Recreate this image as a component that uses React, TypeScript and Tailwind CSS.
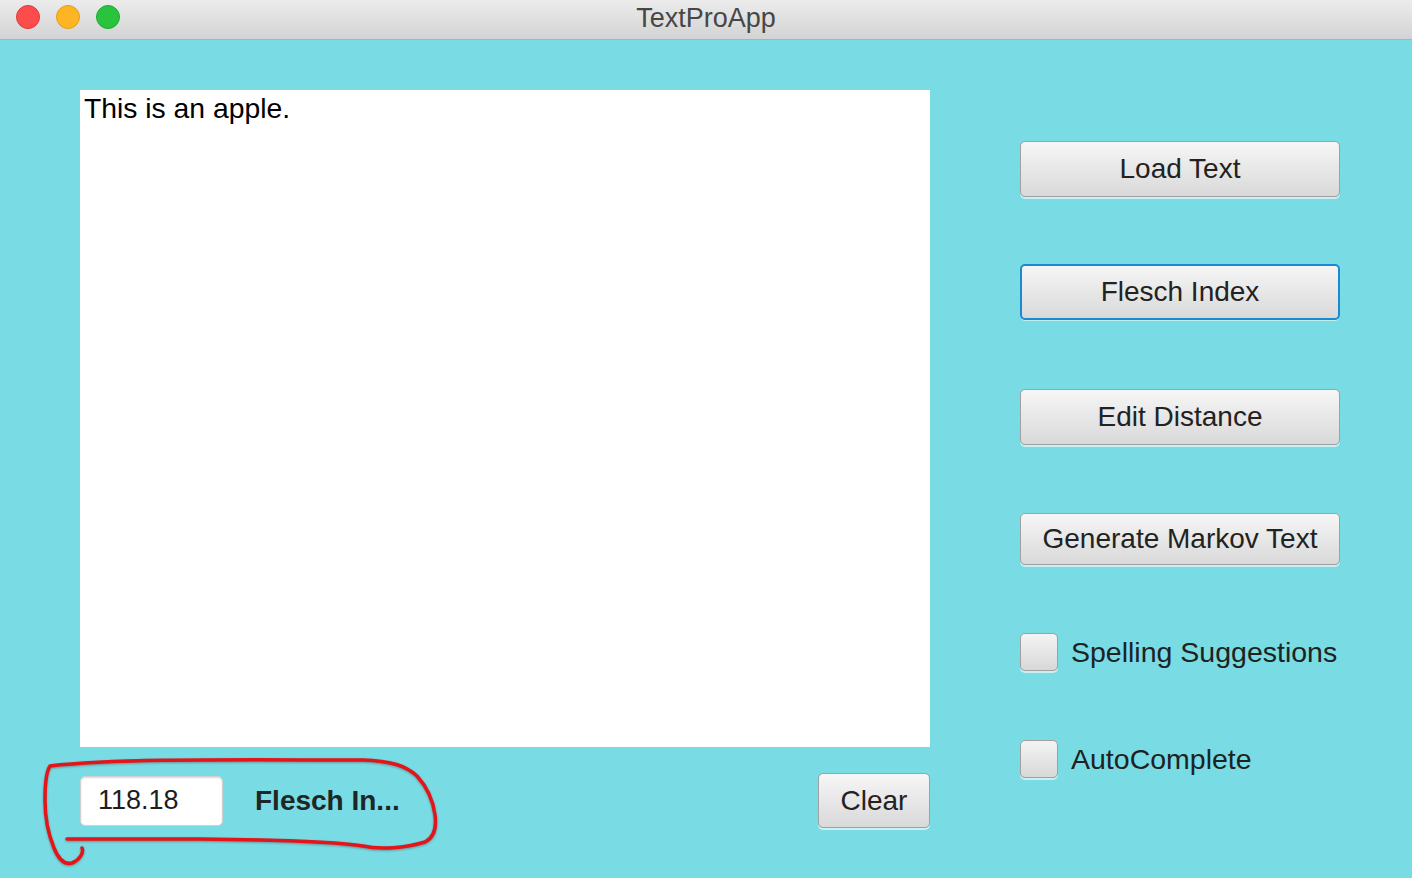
import React from "react";

const font = { fontFamily: '"Liberation Sans", Arial, Helvetica, sans-serif' };

function Btn({ label, focused = false, h = "h-[56px]" }: { label: string; focused?: boolean; h?: string }) {
  return (
    <div
      className={`${h} w-[320px] flex items-center justify-center rounded-[5px] bg-gradient-to-b from-[#f6f6f6] to-[#d9d9d9] text-[28px] text-[#222] ${
        focused
          ? "border-2 border-[#1b8ad3] shadow-[0_1px_0_#bfeff3]"
          : "border border-[#a0a0a0] shadow-[0_2px_0_#c9f1f4]"
      }`}
    >
      {label}
    </div>
  );
}

function Check({ label }: { label: string }) {
  return (
    <div className="flex items-center gap-[13px]">
      <div className="w-[38px] h-[38px] rounded-[5px] border border-[#a0a0a0] bg-gradient-to-b from-[#f4f4f4] to-[#d8d8d8] shadow-[0_2px_0_#c9f1f4]" />
      <span className="text-[28.5px] text-[#1d2222]">{label}</span>
    </div>
  );
}

export default function App() {
  return (
    <div className="relative w-[1412px] h-[878px] overflow-hidden bg-[#79dbe3]" style={font}>
      {/* title bar */}
      <div className="relative h-[40px] flex items-center justify-center bg-gradient-to-b from-[#ececec] to-[#d3d3d3] border-b border-[#b0b0b0]">
        <div className="absolute left-[16px] top-[5px] flex gap-[16px]">
          <div className="w-[24px] h-[24px] rounded-full bg-[#fc4c4b] border border-[#de3a3a]" />
          <div className="w-[24px] h-[24px] rounded-full bg-[#fdb524] border border-[#e09e1e]" />
          <div className="w-[24px] h-[24px] rounded-full bg-[#2ac33d] border border-[#1eab2e]" />
        </div>
        <span className="text-[27px] text-[#474747] leading-none mt-[-2px]">TextProApp</span>
      </div>

      <div className="flex">
        {/* left column */}
        <div className="pl-[80px] pt-[50px] w-[930px] flex flex-col">
          <div className="w-[850px] h-[657px] bg-white px-[4px] pt-[1px] text-[28.3px] text-black leading-[34px]">
            This is an apple.
          </div>
          <div className="flex items-center mt-[26px] h-[55px]">
            <div className="w-[143px] h-[50px] rounded-[5px] bg-white border border-[#d0d0d0] shadow-[inset_0_1px_2px_rgba(0,0,0,0.15)] flex items-center pl-[17px] text-[27px] text-[#1d1d1d]">
              118.18
            </div>
            <span className="ml-[32px] text-[28px] font-bold text-[#1f2626]">Flesch In...</span>
            <div className="ml-auto w-[112px] h-[55px] flex items-center justify-center rounded-[5px] border border-[#a0a0a0] bg-gradient-to-b from-[#f6f6f6] to-[#d9d9d9] text-[28px] text-[#222] shadow-[0_2px_0_#c9f1f4]">
              Clear
            </div>
          </div>
        </div>

        {/* right column */}
        <div className="ml-[90px] pt-[101px] flex flex-col">
          <Btn label="Load Text" />
          <div className="mt-[67px]">
            <Btn label="Flesch Index" focused />
          </div>
          <div className="mt-[69px]">
            <Btn label="Edit Distance" />
          </div>
          <div className="mt-[68px]">
            <Btn label="Generate Markov Text" h="h-[52px]" />
          </div>
          <div className="mt-[66px]">
            <Check label="Spelling Suggestions" />
          </div>
          <div className="mt-[64px]">
            <Check label="AutoComplete" />
          </div>
        </div>
      </div>

      {/* red annotation */}
      <svg className="absolute left-0 top-0 pointer-events-none" width="1412" height="878">
        <path
          d="M82 848 C84 852 80 860 72 863 C64 865 58 858 54 848 C49 836 45 820 45 800 C45 785 46 772 50 766 C120 758 250 760 363 760 C390 761 405 765 417 776 C428 788 433 800 435 815 C437 830 433 838 425 842 C405 848 380 850 363 846 C345 843 300 840 200 839 C140 839 100 839 67 839"
          fill="none"
          stroke="#e3141a"
          strokeWidth="3.5"
          strokeLinecap="round"
          strokeLinejoin="round"
          style={{ filter: "drop-shadow(0 1px 1px rgba(80,0,0,0.35))" }}
        />
      </svg>
    </div>
  );
}
